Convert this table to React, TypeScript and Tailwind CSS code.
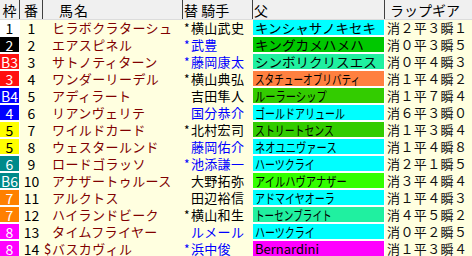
import React from 'react';

type Row = {
  waku: string;
  wakuCls: string;
  no: number;
  mark: string;
  name: string;
  jMark: string;
  jockey: string;
  jCls: string;
  sire: string;
  sireBg: string;
  sireScale: string;
  lap: string;
};

const rows: Row[] = [
  { waku: '1', wakuCls: 'bg-white text-black', no: 1, mark: '', name: 'ヒラボクラターシュ', jMark: '*', jockey: '横山武史', jCls: 'text-black', sire: 'キンシャサノキセキ', sireBg: 'bg-[#00ffff]', sireScale: 'scale-x-[1.04]', lap: '消２平３瞬１' },
  { waku: '2', wakuCls: 'bg-black text-white', no: 2, mark: '', name: 'エアスピネル', jMark: '*', jockey: '武豊', jCls: 'text-[#0000ff]', sire: 'キングカメハメハ', sireBg: 'bg-[#00c800]', sireScale: 'scale-x-[1.05]', lap: '消０平３瞬５' },
  { waku: 'B3', wakuCls: 'bg-[#ff1010] text-white', no: 3, mark: '', name: 'サトノティターン', jMark: '*', jockey: '藤岡康太', jCls: 'text-[#0000ff]', sire: 'シンボリクリスエス', sireBg: 'bg-[#20f0a0]', sireScale: 'scale-x-[1.04]', lap: '消０平４瞬３' },
  { waku: '3', wakuCls: 'bg-[#ff1010] text-white', no: 4, mark: '', name: 'ワンダーリーデル', jMark: '*', jockey: '横山典弘', jCls: 'text-black', sire: 'スタチューオブリバティ', sireBg: 'bg-[#ff8040]', sireScale: 'scale-x-[0.74]', lap: '消１平４瞬２' },
  { waku: 'B4', wakuCls: 'bg-[#0000ff] text-white', no: 5, mark: '', name: 'アディラート', jMark: '', jockey: '吉田隼人', jCls: 'text-black', sire: 'ルーラーシップ', sireBg: 'bg-[#33cc00]', sireScale: 'scale-x-[0.79]', lap: '消１平７瞬４' },
  { waku: '4', wakuCls: 'bg-[#0000ff] text-white', no: 6, mark: '', name: 'リアンヴェリテ', jMark: '', jockey: '国分恭介', jCls: 'text-[#0000ff]', sire: 'ゴールドアリュール', sireBg: 'bg-[#00ffff]', sireScale: 'scale-x-[0.77]', lap: '消６平３瞬０' },
  { waku: '5', wakuCls: 'bg-[#ffff00] text-black', no: 7, mark: '', name: 'ワイルドカード', jMark: '*', jockey: '北村宏司', jCls: 'text-black', sire: 'ストリートセンス', sireBg: 'bg-[#33cc00]', sireScale: 'scale-x-[0.76]', lap: '消１平３瞬４' },
  { waku: '5', wakuCls: 'bg-[#ffff00] text-black', no: 8, mark: '', name: 'ウェスタールンド', jMark: '', jockey: '藤岡佑介', jCls: 'text-[#0000ff]', sire: 'ネオユニヴァース', sireBg: 'bg-[#00ffff]', sireScale: 'scale-x-[0.79]', lap: '消１平４瞬８' },
  { waku: '6', wakuCls: 'bg-[#008a8a] text-white', no: 9, mark: '', name: 'ロードゴラッソ', jMark: '*', jockey: '池添謙一', jCls: 'text-[#0000ff]', sire: 'ハーツクライ', sireBg: 'bg-[#00ffff]', sireScale: 'scale-x-[0.77]', lap: '消２平１瞬５' },
  { waku: 'B6', wakuCls: 'bg-[#008a8a] text-white', no: 10, mark: '', name: 'アナザートゥルース', jMark: '', jockey: '大野拓弥', jCls: 'text-black', sire: 'アイルハヴアナザー', sireBg: 'bg-[#33ff00]', sireScale: 'scale-x-[0.79]', lap: '消３平４瞬４' },
  { waku: '7', wakuCls: 'bg-[#ff8000] text-white', no: 11, mark: '', name: 'アルクトス', jMark: '', jockey: '田辺裕信', jCls: 'text-black', sire: 'アドマイヤオーラ', sireBg: 'bg-[#00ffff]', sireScale: 'scale-x-[0.77]', lap: '消１平４瞬３' },
  { waku: '7', wakuCls: 'bg-[#ff8000] text-white', no: 12, mark: '', name: 'ハイランドビーク', jMark: '*', jockey: '横山和生', jCls: 'text-black', sire: 'トーセンブライト', sireBg: 'bg-[#20f0a0]', sireScale: 'scale-x-[0.74]', lap: '消４平５瞬２' },
  { waku: '8', wakuCls: 'bg-[#ff00ff] text-white', no: 13, mark: '', name: 'タイムフライヤー', jMark: '', jockey: 'ルメール', jCls: 'text-[#0000ff]', sire: 'ハーツクライ', sireBg: 'bg-[#00ffff]', sireScale: 'scale-x-[0.77]', lap: '消０平２瞬５' },
  { waku: '8', wakuCls: 'bg-[#ff00ff] text-white', no: 14, mark: '$', name: 'バスカヴィル', jMark: '*', jockey: '浜中俊', jCls: 'text-[#0000ff]', sire: 'Bernardini', sireBg: 'bg-[#ff00ff]', sireScale: 'scale-x-[1]', lap: '消１平３瞬４' },
];

const HeaderRow: React.FC = () => (
  <div className="flex h-[20px] bg-[#f0f0f0] border-b border-[#dcdcdc] text-[14px] leading-none text-black">
    <div className="w-[20px] flex items-center justify-center border-r border-[#404040]">枠</div>
    <div className="w-[23px] flex items-center justify-center border-r border-[#404040]">番</div>
    <div className="w-[140px] flex items-center pl-[16px] border-r border-[#404040] tracking-[1px]">馬名</div>
    <div className="w-[70px] flex items-center pl-[1px] border-r border-[#404040]">替&nbsp;騎手</div>
    <div className="w-[132px] flex items-center pl-[1px] border-r border-[#404040]">父</div>
    <div className="w-[87px] flex items-center pl-[5px]">ラップギア</div>
  </div>
);

const BodyRow: React.FC<{ r: Row }> = ({ r }) => (
  <div className="flex h-[17px] text-[13px] leading-none">
    <div className="w-[20px] h-full bg-white">
      <div className={`w-[19px] h-[15px] flex items-center justify-center text-[14px] ${r.wakuCls}`}>{r.waku}</div>
    </div>
    <div className="w-[23px] h-[15px] flex items-center justify-center text-[14px] text-black">{r.no}</div>
    <div className="w-[140px] h-[15px] flex items-center pl-[1px] text-[#800000] tracking-[0.4px] whitespace-nowrap">
      <span className="w-[8px] shrink-0">{r.mark}</span>
      <span>{r.name}</span>
    </div>
    <div className={`w-[70px] h-[15px] flex items-center pl-[1px] whitespace-nowrap tracking-[0.3px] ${r.jCls}`}>
      <span className="w-[7px] shrink-0 text-[12px]">{r.jMark}</span>
      <span>{r.jockey}</span>
    </div>
    <div className="w-[132px] h-full bg-white">
      <div className={`w-[131px] h-[15px] flex items-center pl-[2px] ${r.sireBg}`}>
        <span className={`inline-block origin-left whitespace-nowrap text-black ${r.sireScale}`}>{r.sire}</span>
      </div>
    </div>
    <div className="w-[87px] h-[15px] flex items-center pl-[2px] text-[#111] tracking-[0.4px] whitespace-nowrap">{r.lap}</div>
  </div>
);

export default function App() {
  return (
    <div className="w-[472px] h-[256px] overflow-hidden bg-[#ffffe0] font-['Noto_Sans_CJK_JP','Liberation_Sans',sans-serif]">
      <HeaderRow />
      {rows.map((r) => (
        <BodyRow key={r.no} r={r} />
      ))}
    </div>
  );
}
